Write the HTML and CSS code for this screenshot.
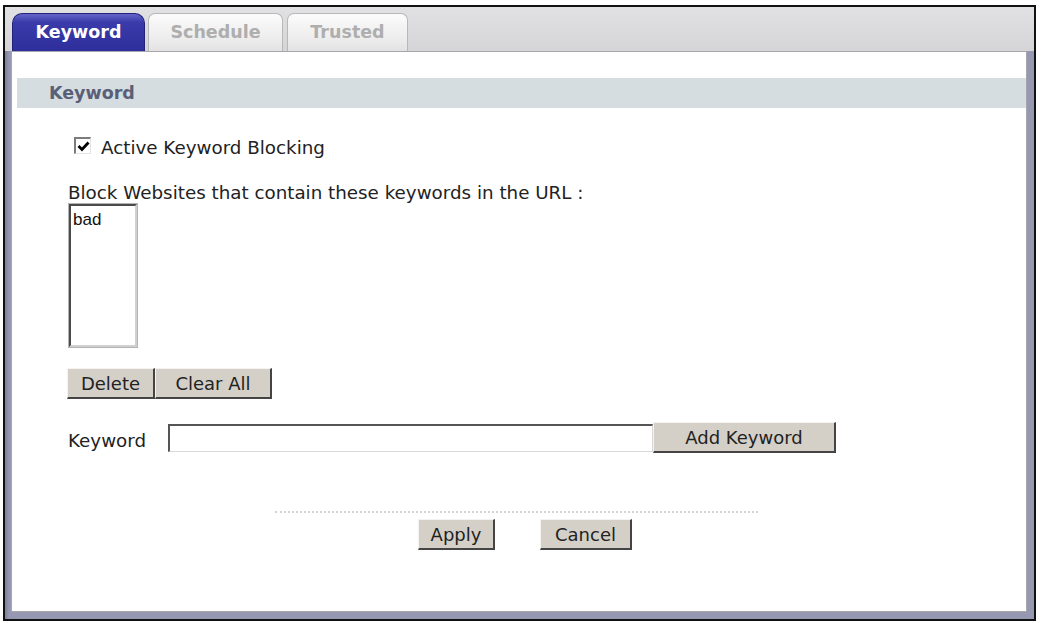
FILE: index.html
```html
<!DOCTYPE html>
<html>
<head>
<meta charset="utf-8">
<title>Keyword</title>
<link rel="stylesheet" href="styles.css">
</head>
<body>
<div class="frame">
  <div class="tabbar">
    <div class="tab tab-active tab-keyword">Keyword</div>
    <div class="tab tab-schedule">Schedule</div>
    <div class="tab tab-trusted">Trusted</div>
  </div>
  <div class="body">
    <div class="panel">
      <div class="section-head">Keyword</div>
      <div class="content">
        <div class="check-row">
          <span class="checkbox"><svg width="13" height="13" viewBox="0 0 13 13"><path d="M1.5 6 L5 9.5 L11.5 2.5" fill="none" stroke="#000" stroke-width="2.8"/></svg></span>
          <span class="check-label">Active Keyword Blocking</span>
        </div>
        <div class="block-label">Block Websites that contain these keywords in the URL :</div>
        <div class="listbox"><div class="list-item">bad</div></div>
        <div class="btn-row">
          <button class="btn btn-delete">Delete</button><button class="btn btn-clear">Clear All</button>
        </div>
        <div class="kw-row">
          <span class="kw-label">Keyword</span>
          <span class="kw-input"></span>
          <button class="btn btn-add">Add Keyword</button>
        </div>
      </div>
      <div class="footer">
        <div class="dots"></div>
        <div class="footer-btns">
          <button class="btn btn-apply">Apply</button>
          <button class="btn btn-cancel">Cancel</button>
        </div>
      </div>
    </div>
  </div>
</div>
</body>
</html>
```

FILE: styles.css
```css
html, body {
  margin: 0;
  padding: 0;
  background: #ffffff;
}

.frame {
  margin: 5px 0 0 3px;
  width: 1029px;
  border: 2px solid #111;
  font-family: "DejaVu Sans", Verdana, sans-serif;
  color: #222;
}

.tabbar {
  height: 44px;
  box-sizing: border-box;
  background: linear-gradient(#e1e1e3, #d5d5d8);
  display: flex;
  align-items: flex-end;
  padding-left: 7px;
}

.tab {
  height: 38px;
  box-sizing: border-box;
  font-weight: bold;
  font-size: 17.5px;
  line-height: 37px;
  text-align: center;
  border-radius: 7px 7px 0 0;
}

.tab-active {
  color: #ffffff;
  background: linear-gradient(#6565c8 0%, #3b3bab 22%, #2d2d9c 100%);
  border: 1px solid #22227a;
  border-bottom: none;
  border-radius: 10px 10px 0 0;
}

.tab-keyword { width: 133px; }

.tab-schedule {
  width: 135px;
  margin-left: 3px;
}

.tab-trusted {
  width: 121px;
  margin-left: 4px;
}

.tab-schedule, .tab-trusted {
  color: #aeaeae;
  background: linear-gradient(#fbfbfb, #ececec 70%, #e2e2e2);
  border: 1px solid #b8b8b8;
  border-bottom: none;
}

.body {
  background: linear-gradient(90deg, #7c8099, #9598b0 4px);
  padding: 0 7px 7px 6px;
}

.panel {
  height: 559px;
  border: 1px solid #a6a6ac;
  background: #fff;
}

.section-head {
  margin: 26px 0 0 5px;
  height: 30px;
  line-height: 30px;
  padding-left: 32px;
  background: #d6dde0;
  color: #5a5f78;
  font-weight: bold;
  font-size: 17.5px;
}

.content {
  padding-left: 56px;
  font-size: 18.3px;
}

.check-row {
  display: flex;
  align-items: flex-start;
  margin: 29px 0 0 6px;
  line-height: 22px;
}

.checkbox {
  width: 17px;
  height: 17px;
  box-sizing: border-box;
  border-style: solid;
  border-width: 2px 1px 1px 2px;
  border-color: #7c7c7c #e4e4e4 #e4e4e4 #7c7c7c;
  background: #fff;
  margin-top: 0;
  display: flex;
  align-items: center;
  justify-content: center;
}

.checkbox svg { display: block; }

.check-label {
  margin-left: 10px;
}

.block-label {
  margin-top: 23px;
  line-height: 22px;
}

.listbox {
  width: 68px;
  height: 143px;
  box-sizing: border-box;
  margin-left: 1px;
  border-style: solid;
  border-width: 2px;
  border-color: #4a4a4a #d0d0d0 #d0d0d0 #4a4a4a;
  box-shadow: 0 0 0 1px #b4b4b4;
  background: #fff;
}

.list-item {
  font-family: "Liberation Sans", Arial, sans-serif;
  font-size: 17px;
  line-height: 20px;
  padding: 4px 0 0 2px;
  color: #111;
}

.btn {
  font-family: "DejaVu Sans", Verdana, sans-serif;
  font-size: 18px;
  color: #222;
  background: #d4d0c8;
  height: 31px;
  box-sizing: border-box;
  padding: 2px 0 0 0;
  line-height: 26px;
  text-align: center;
  border-style: solid;
  border-width: 1px 2px 2px 1px;
  border-color: #f4f3ef #444 #444 #f4f3ef;
  margin: 0;
  display: inline-block;
  vertical-align: top;
}

.btn-row {
  margin-top: 21px;
  margin-left: -1px;
  display: flex;
}

.btn-delete { width: 88px; }
.btn-clear { width: 117px; }

.kw-row {
  display: flex;
  align-items: center;
  margin-top: 23px;
}

.kw-label {
  width: 100px;
  line-height: 22px;
  margin-top: 6px;
}

.kw-input {
  width: 485px;
  height: 28px;
  box-sizing: border-box;
  border-style: solid;
  border-width: 2px 1px 1px 2px;
  border-color: #555 #d8d8d8 #d8d8d8 #555;
  background: #fff;
}

.btn-add { width: 183px; }

.footer {
  margin: 58px 0 0 263px;
  width: 483px;
}

.dots {
  height: 0;
  border-top: 2px dotted #d4d4d4;
}

.footer-btns {
  margin: 6px 0 0 143px;
  display: flex;
  gap: 45px;
}

.btn-apply { width: 77px; }
.btn-cancel { width: 92px; }
```
